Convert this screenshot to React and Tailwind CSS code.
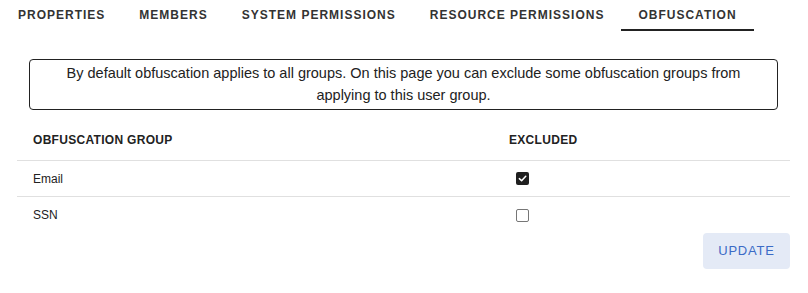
const tabs = [
  "PROPERTIES",
  "MEMBERS",
  "SYSTEM PERMISSIONS",
  "RESOURCE PERMISSIONS",
  "OBFUSCATION",
];

const groups = [
  { name: "Email", excluded: true },
  { name: "SSN", excluded: false },
];

const Checkbox = ({ checked }) =>
  checked ? (
    <span className="w-[13px] h-[13px] rounded-[2px] bg-[#1f1f1f] flex items-center justify-center">
      <svg width="9" height="9" viewBox="0 0 10 10" fill="none">
        <path
          d="M1.5 5.2 L4 7.5 L8.6 2.6"
          stroke="white"
          strokeWidth="1.7"
          strokeLinecap="round"
          strokeLinejoin="round"
        />
      </svg>
    </span>
  ) : (
    <span className="w-[13px] h-[13px] rounded-[2px] border border-[#767676] bg-white" />
  );

export default function App() {
  return (
    <div className="w-[808px] h-[293px] bg-white font-['Liberation_Sans',Arial,sans-serif] text-[#222]">
      <div className="flex pl-px h-[31px]">
        {tabs.map((tab) => (
          <div
            key={tab}
            className={
              "px-[17px] pt-[6px] text-[12px] font-bold tracking-[1px] text-[#333] " +
              (tab === "OBFUSCATION" ? "border-b-2 border-[#222]" : "")
            }
          >
            {tab}
          </div>
        ))}
      </div>

      <div className="pl-[17px] pr-[18px]">
        <div className="mx-3 mt-7 rounded border border-[#222] px-[30px] pt-[2px] pb-[3px] text-center text-[14.5px] leading-[22px] text-[#222]">
          By default obfuscation applies to all groups. On this page you can
          exclude some obfuscation groups from applying to this user group.
        </div>

        <div className="mt-[10px]">
          <div className="grid grid-cols-[476px_1fr] h-[41px] items-center border-b border-[#e0e0e0] text-[12px] font-bold tracking-[0.3px] text-[#222]">
            <div className="pl-4">OBFUSCATION GROUP</div>
            <div className="pl-4">EXCLUDED</div>
          </div>
          {groups.map((g, i) => (
            <div
              key={g.name}
              className={
                "grid grid-cols-[476px_1fr] h-[36px] items-center text-[12px] text-[#222] " +
                (i < groups.length - 1 ? "border-b border-[#e0e0e0]" : "")
              }
            >
              <div className="pl-4">{g.name}</div>
              <div className="pl-[23px] flex">
                <Checkbox checked={g.excluded} />
              </div>
            </div>
          ))}
        </div>

        <div className="flex justify-end">
          <button className="w-[87px] h-[36px] rounded-[4px] bg-[#e4eaf6] text-[13px] tracking-[0.8px] text-[#3b6bc6]">
            UPDATE
          </button>
        </div>
      </div>
    </div>
  );
}
